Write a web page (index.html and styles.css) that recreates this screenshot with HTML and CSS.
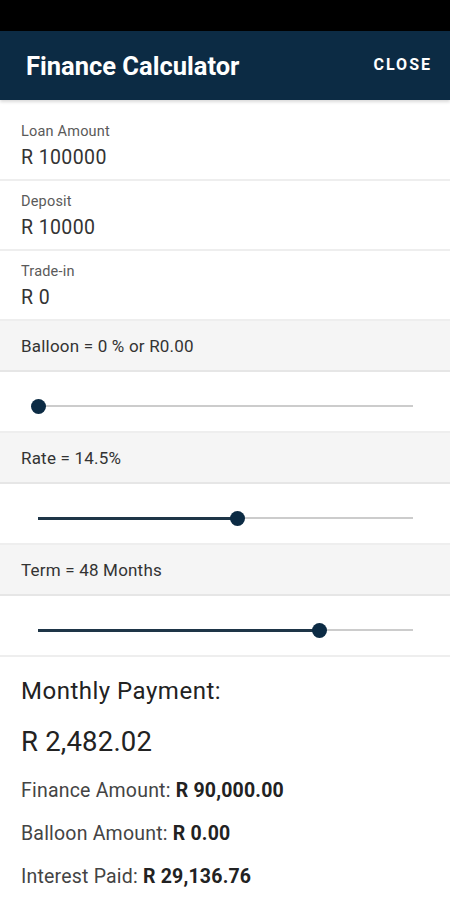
FILE: index.html
```html
<!DOCTYPE html>
<html lang="en">
<head>
    <meta charset="UTF-8">
    <meta name="viewport" content="width=device-width, initial-scale=1.0">
    <title>Finance Calculator</title>
    <link rel="stylesheet" href="styles.css">
</head>
<body>
    <div class="status-bar"></div>
    <header class="app-bar">
        <h1>Finance Calculator</h1>
        <button class="close-button">CLOSE</button>
    </header>

    <div class="field first">
        <label>Loan Amount</label>
        <div class="value">R 100000</div>
    </div>
    <div class="field">
        <label>Deposit</label>
        <div class="value">R 10000</div>
    </div>
    <div class="field">
        <label>Trade-in</label>
        <div class="value">R 0</div>
    </div>

    <div class="section-title">Balloon = 0 % or R0.00</div>
    <div class="slider-row">
        <div class="track"><div class="fill" style="width: 0%"></div></div>
    </div>

    <div class="section-title">Rate = 14.5%</div>
    <div class="slider-row">
        <div class="track"><div class="fill" style="width: 53.3%"></div></div>
    </div>

    <div class="section-title">Term = 48 Months</div>
    <div class="slider-row">
        <div class="track"><div class="fill" style="width: 75%"></div></div>
    </div>

    <div class="results">
        <h2>Monthly Payment:</h2>
        <p class="payment">R 2,482.02</p>
        <p class="line">Finance Amount: <b>R 90,000.00</b></p>
        <p class="line">Balloon Amount: <b>R 0.00</b></p>
        <p class="line">Interest Paid: <b>R 29,136.76</b></p>
    </div>
</body>
</html>
```

FILE: styles.css
```css
body {
    margin: 0;
    font-family: Roboto, "Liberation Sans", sans-serif;
    background: #fff;
    color: #333;
}

.status-bar {
    height: 31px;
    background: #000;
}

.app-bar {
    height: 69px;
    background: #0c2b44;
    display: flex;
    align-items: center;
    justify-content: space-between;
    padding: 0 18px 0 26px;
    box-shadow: 0 2px 3px rgba(0, 0, 0, 0.15);
    position: relative;
}

.app-bar h1 {
    margin: 0;
    color: #fff;
    font-size: 25.5px;
    font-weight: 700;
}

.close-button {
    background: none;
    border: none;
    color: #fff;
    font-family: inherit;
    font-weight: 700;
    font-size: 16px;
    letter-spacing: 2px;
    padding: 0;
    margin-top: -2px;
}

.field {
    padding: 12px 21px 9px;
    border-bottom: 2px solid #eeeeee;
    display: flex;
    flex-direction: column;
}

.field.first {
    padding-top: 23px;
}

.field label {
    font-size: 14.5px;
    line-height: 17px;
    letter-spacing: 0.2px;
    color: #5a5a5a;
}

.field .value {
    margin-top: 6px;
    font-size: 19.5px;
    line-height: 24px;
    letter-spacing: 0.4px;
    color: #333;
}

.section-title {
    height: 49px;
    line-height: 51px;
    padding-left: 21px;
    background: #f5f5f5;
    border-bottom: 2px solid #e6e6e6;
    font-size: 17px;
    letter-spacing: 0.2px;
    color: #333;
}

.slider-row {
    border-bottom: 2px solid #eeeeee;
    padding: 33px 37px 0 38px;
    box-sizing: border-box;
    height: 61px;
}

.track {
    height: 2px;
    background: #cccccc;
    position: relative;
}

.fill {
    height: 3px;
    margin-top: -0.5px;
    background: #1e3547;
    position: relative;
}

.fill::after {
    content: "";
    position: absolute;
    right: -7.5px;
    top: -6px;
    width: 15px;
    height: 15px;
    border-radius: 50%;
    background: #0c2b44;
}

.results {
    padding: 19px 21px;
}

.results h2 {
    margin: 0;
    font-size: 24px;
    font-weight: 400;
    line-height: 30px;
    letter-spacing: 0.5px;
    color: #222;
}

.payment {
    margin: 19px 0 0;
    font-size: 27.5px;
    line-height: 34px;
    letter-spacing: 0.2px;
    color: #222;
}

.line {
    margin: 19px 0 0;
    font-size: 19.5px;
    line-height: 26px;
    letter-spacing: 0.2px;
    color: #444;
}

.line + .line {
    margin-top: 17px;
}

.line b {
    color: #222;
}
```
